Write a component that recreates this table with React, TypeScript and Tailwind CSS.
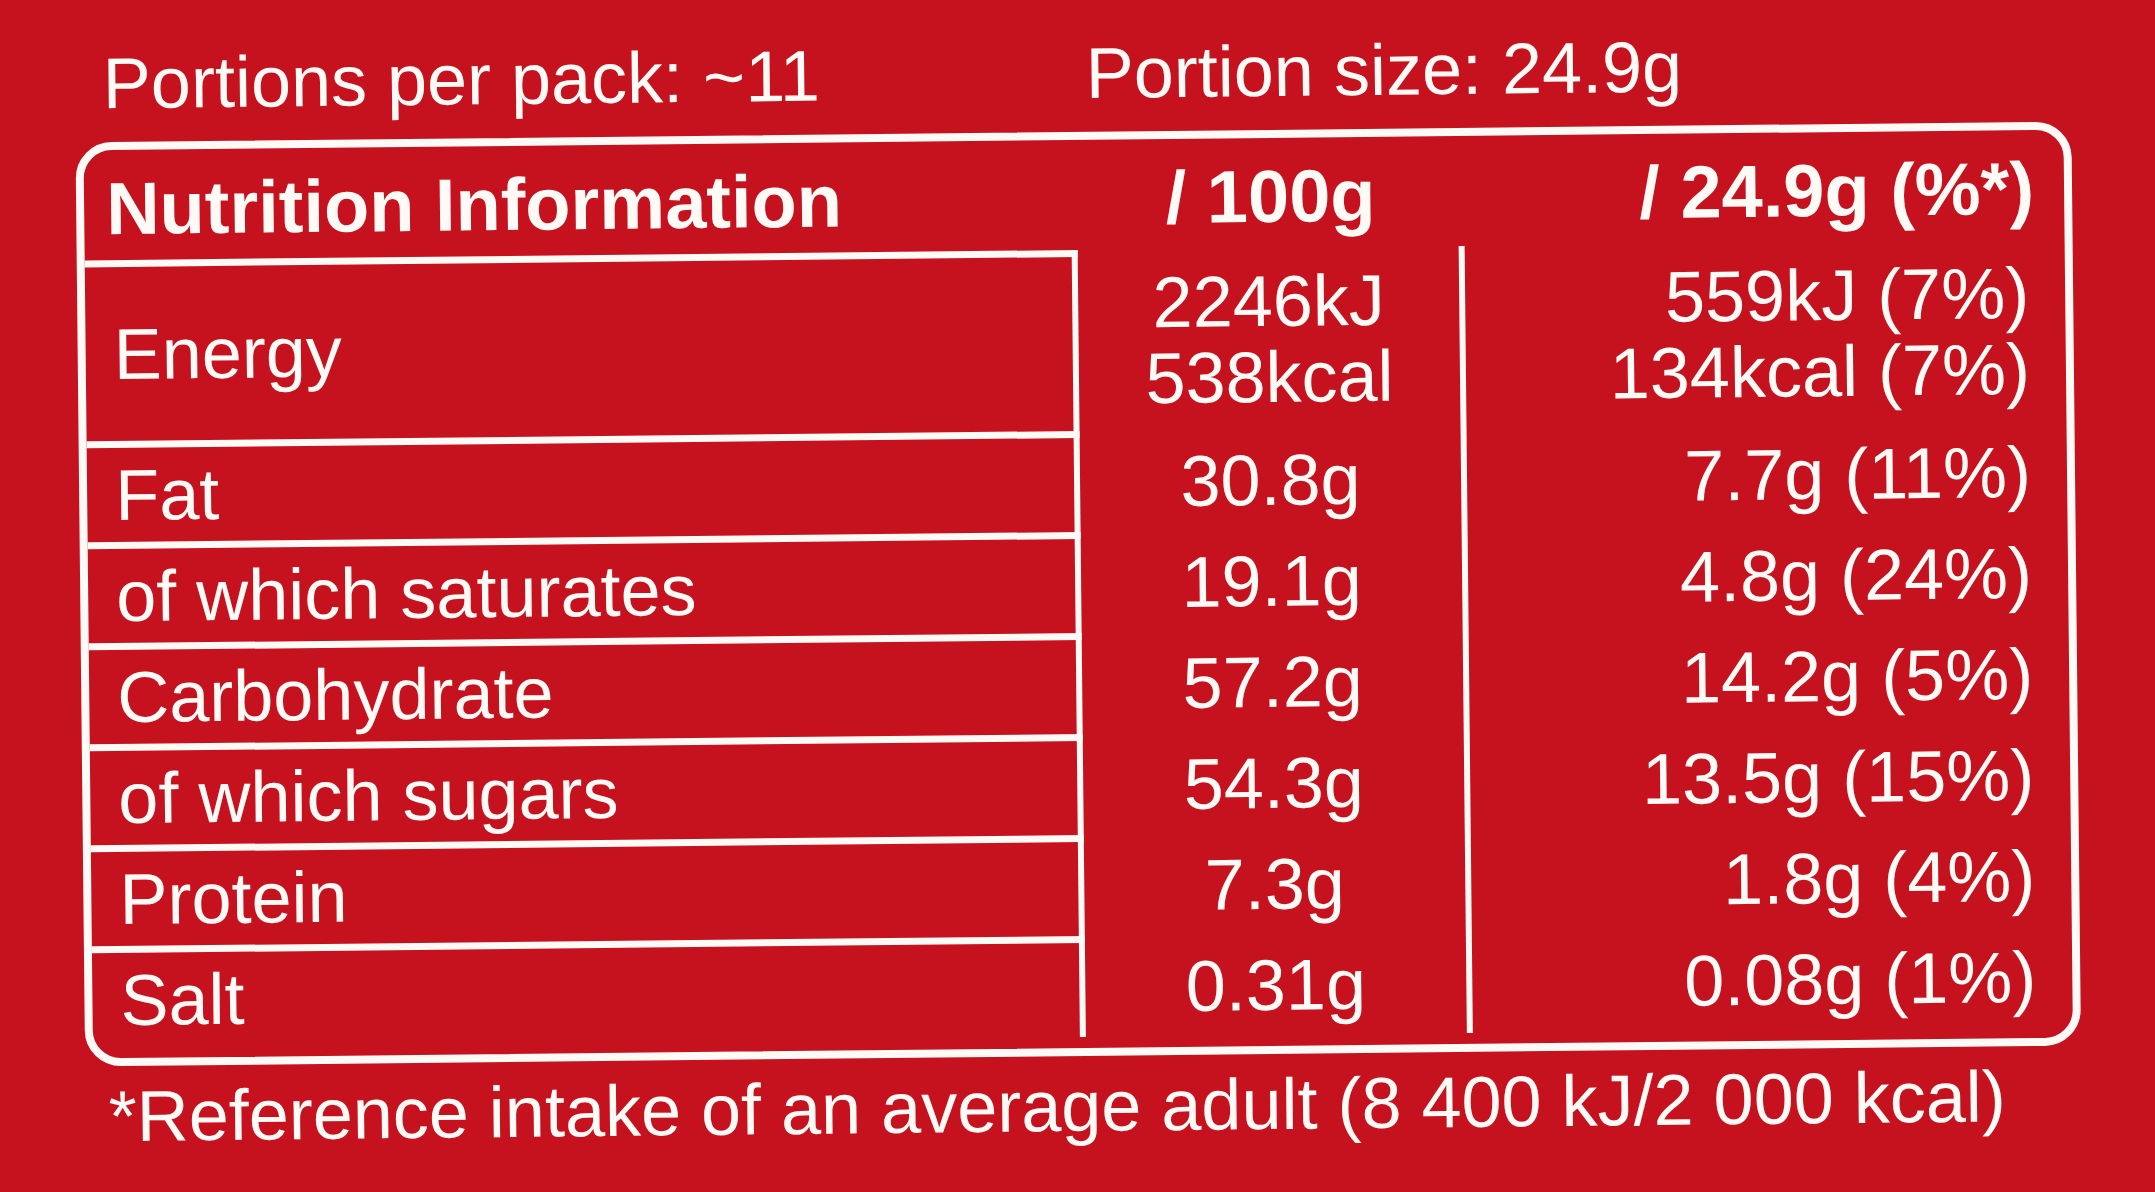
const rows = [
  { name: 'Fat', per100: '30.8g', portion: '7.7g (11%)' },
  { name: 'of which saturates', per100: '19.1g', portion: '4.8g (24%)' },
  { name: 'Carbohydrate', per100: '57.2g', portion: '14.2g (5%)' },
  { name: 'of which sugars', per100: '54.3g', portion: '13.5g (15%)' },
  { name: 'Protein', per100: '7.3g', portion: '1.8g (4%)' },
  { name: 'Salt', per100: '0.31g', portion: '0.08g (1%)' },
]

const App = () => {
  return (
    <div className="h-[1192px] w-full overflow-hidden bg-[#c6111e] font-['Liberation_Sans',Arial,sans-serif] text-[72px] leading-none text-[#fffaf5]">
      <div className="-rotate-[0.6deg]">
        {/* portions line */}
        <div className="flex pl-[108px] pt-[37px]">
          <span className="w-[983px]">Portions per pack: ~11</span>
          <span>Portion size: 24.9g</span>
        </div>

        {/* nutrition box */}
        <div className="mt-[23px] ml-[80px] flex h-[924px] w-[1996px] flex-col rounded-[36px] border-[8px] border-[#fffaf5] pb-[11px]">
          <div className="grid h-[110px] grid-cols-[993px_387px_1fr] items-end pb-[14px] text-[74px] font-bold">
            <div className="pl-[22px]">Nutrition Information</div>
            <div className="text-center">/ 100g</div>
            <div className="pr-[30px] text-right">/ 24.9g (%*)</div>
          </div>

          <div className="grid grid-cols-[993px_387px_1fr] grid-rows-[181px_repeat(6,101px)]">
            <div className="flex items-center border-t-[7px] border-r-[6px] border-[#fffaf5] pl-[28px]">
              Energy
            </div>
            <div className="flex flex-col items-center justify-center border-r-[6px] border-[#fffaf5] leading-[76px]">
              <span>2246kJ</span>
              <span>538kcal</span>
            </div>
            <div className="flex flex-col items-end justify-center pr-[36px] leading-[76px]">
              <span>559kJ (7%)</span>
              <span>134kcal (7%)</span>
            </div>

            {rows.map((row) => (
              <>
                <div
                  key={row.name}
                  className="flex items-center border-t-[7px] border-r-[6px] border-[#fffaf5] pl-[28px]"
                >
                  {row.name}
                </div>
                <div className="flex items-center justify-center border-r-[6px] border-[#fffaf5]">
                  {row.per100}
                </div>
                <div className="flex items-center justify-end pr-[36px]">
                  {row.portion}
                </div>
              </>
            ))}
          </div>
        </div>

        <div className="mt-[14px] pl-[103px]">
          *Reference intake of an average adult (8 400 kJ/2 000 kcal)
        </div>
      </div>
    </div>
  )
}

export default App
